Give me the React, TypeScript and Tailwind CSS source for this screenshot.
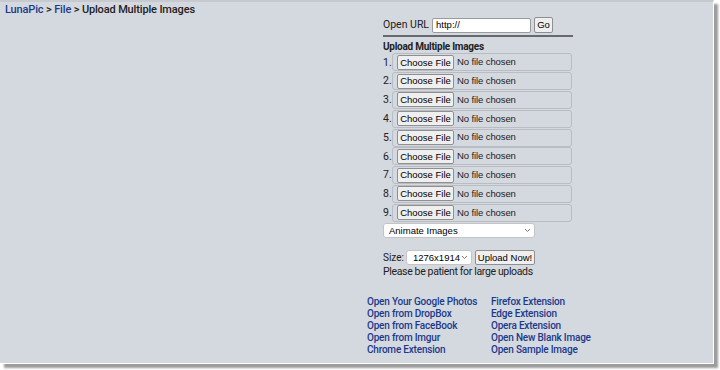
const font = { fontFamily: 'Roboto, "Noto Sans", sans-serif' }
const ctrl = { fontFamily: '"Liberation Sans", Arial, sans-serif' }

const leftLinks = ['Open Your Google Photos', 'Open from DropBox', 'Open from FaceBook', 'Open from Imgur', 'Chrome Extension']
const rightLinks = ['Firefox Extension', 'Edge Extension', 'Opera Extension', 'Open New Blank Image', 'Open Sample Image']

const btn =
  'h-[15px] rounded-[2px] border border-[#8f8f8f] bg-[#efefef] text-[9.5px] leading-none text-black flex items-center justify-center whitespace-nowrap'

const Chevron = () => (
  <svg width="7" height="5" viewBox="0 0 7 5">
    <path d="M1 1l2.5 2.5L6 1" fill="none" stroke="#777" strokeWidth="1" />
  </svg>
)

const FileRow = ({ n }: { n: number }) => (
  <div className="flex items-center h-[18.8px]">
    <span className="w-[9px] text-[10.5px] text-[#222]">{n}.</span>
    <div
      className="flex items-center gap-[3px] w-[180px] h-[18px] pl-[4px] rounded-[3px] border border-[#b9bcc2]"
      style={ctrl}
    >
      <span className={btn + ' w-[57px]'}>Choose File</span>
      <span className="text-[9.5px] text-[#222] tracking-[-0.1px]">No file chosen</span>
    </div>
  </div>
)

export default function App() {
  return (
    <div className="w-[720px] h-[370px] bg-white" style={font}>
      <div className="w-[714px] h-[364px] bg-[#d4d8df] border-t-2 border-t-[#c6c9ce] border-r border-b border-white shadow-[4px_4px_2px_#9c9c9c] flex flex-col">
        <div className="pl-[5px] pt-[1px] text-[11px] tracking-[-0.15px] font-medium text-[#222] leading-[14px] whitespace-nowrap">
          <a className="text-[#1b3a8c]">LunaPic</a> &gt; <a className="text-[#1b3a8c]">File</a> &gt; Upload Multiple Images
        </div>

        <div className="ml-[381px] w-[192px] flex flex-col">
          <div className="flex items-center h-[16px] pl-[2px] text-[10.5px] text-[#222]">
            <span>Open URL</span>
            <span
              className="ml-[3px] w-[99px] h-[15px] bg-white border border-[#9a9a9a] rounded-[2px] pl-[3px] flex items-center text-[9.5px] text-black"
              style={ctrl}
            >
              http://
            </span>
            <span className={btn + ' ml-[3px] w-[19px] h-[16px]'} style={ctrl}>Go</span>
          </div>
          <div className="mt-[2px] ml-[2px] h-[2px] bg-[#666a70]" />
          <div className="mt-[3px] pl-[2px] text-[10px] tracking-[-0.25px] font-bold text-[#222] leading-[13px]">Upload Multiple Images</div>
          <div className="pl-[2px] flex flex-col">
            {[1, 2, 3, 4, 5, 6, 7, 8, 9].map((n) => (
              <FileRow key={n} n={n} />
            ))}
          </div>
          <div
            className="ml-[2px] mt-[1px] w-[152px] h-[15px] bg-white border border-[#c4c4c4] rounded-[3px] flex items-center justify-between pl-[5px] pr-[3px] text-[9.5px] text-black"
            style={ctrl}
          >
            <span>Animate Images</span>
            <Chevron />
          </div>
          <div className="mt-[12px] pl-[2px] flex items-center h-[15px] text-[10px] text-[#222]">
            <span>Size:</span>
            <span
              className="ml-[2px] w-[66px] h-[15px] bg-white border border-[#c4c4c4] rounded-[3px] flex items-center justify-between pl-[6px] pr-[3px] text-[9.5px] text-black"
              style={ctrl}
            >
              <span>1276x1914</span>
              <Chevron />
            </span>
            <span className={btn + ' ml-[3px] w-[60px]'} style={ctrl}>Upload Now!</span>
          </div>
          <div className="pl-[2px] text-[10.5px] tracking-[-0.35px] text-[#222] leading-[13px] whitespace-nowrap">Please be patient for large uploads</div>
        </div>

        <div className="ml-[367px] mt-[18px] flex text-[10px] tracking-[-0.2px] font-medium text-[#1b3a8c] leading-[12px] whitespace-nowrap">
          <div className="w-[124px] flex flex-col">
            {leftLinks.map((l) => (
              <a key={l}>{l}</a>
            ))}
          </div>
          <div className="flex flex-col">
            {rightLinks.map((l) => (
              <a key={l}>{l}</a>
            ))}
          </div>
        </div>
      </div>
    </div>
  )
}
